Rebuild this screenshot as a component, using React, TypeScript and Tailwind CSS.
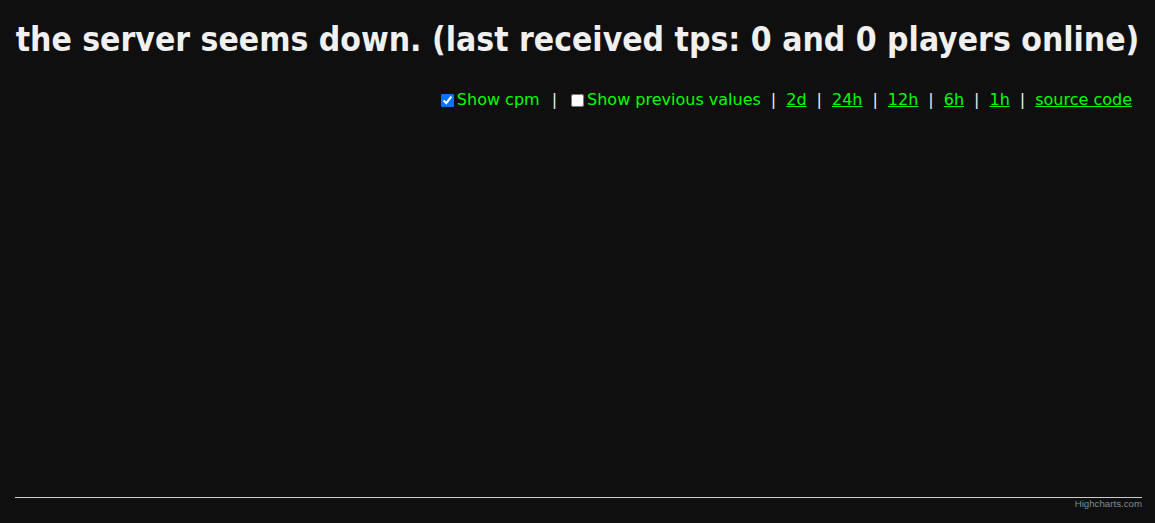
export default function App() {
  const links = ["2d", "24h", "12h", "6h", "1h"];
  return (
    <div className="flex h-[523px] w-full flex-col bg-[#0f0f0f] text-[#eeeeee]" style={{ fontFamily: '"DejaVu Sans", Verdana, sans-serif' }}>
      <h1 className="pt-[20px] text-center text-[33.4px] font-bold leading-[40px] whitespace-nowrap text-[#f0f0f0]" style={{ fontFamily: '"DejaVu Sans Condensed", "DejaVu Sans", sans-serif' }}>
        the server seems down. (last received tps: 0 and 0 players online)
      </h1>
      <div className="mt-[30px] flex items-center justify-end pr-[23px] text-[16px] leading-[20px] text-[#00ff00]">
        <label className="flex items-center">
          <input type="checkbox" defaultChecked className="m-0 mr-[3px] h-[13px] w-[13px] accent-[#0075ff]" />
          Show cpm
        </label>
        <span className="pl-[12px] pr-[14px] text-[#eeeeee]">|</span>
        <label className="flex items-center">
          <input type="checkbox" className="m-0 mr-[3px] h-[13px] w-[13px]" />
          Show previous values
        </label>
        {links.map((l) => (
          <span key={l} className="flex items-center">
            <span className="px-[10px] text-[#eeeeee]">|</span>
            <a href="#" className="underline text-[#00ff00]">{l}</a>
          </span>
        ))}
        <span className="px-[10px] text-[#eeeeee]">|</span>
        <a href="#" className="underline text-[#00ff00]">source code</a>
      </div>
      <div className="ml-[15px] mr-[13px] mt-auto border-t border-[#cccccc]" />
      <div className="flex h-[25px] justify-end pr-[13px] text-[9.7px] leading-[12px] text-[#7f8c99]" style={{ fontFamily: '"Liberation Sans", Arial, sans-serif' }}>
        Highcharts.com
      </div>
    </div>
  );
}
